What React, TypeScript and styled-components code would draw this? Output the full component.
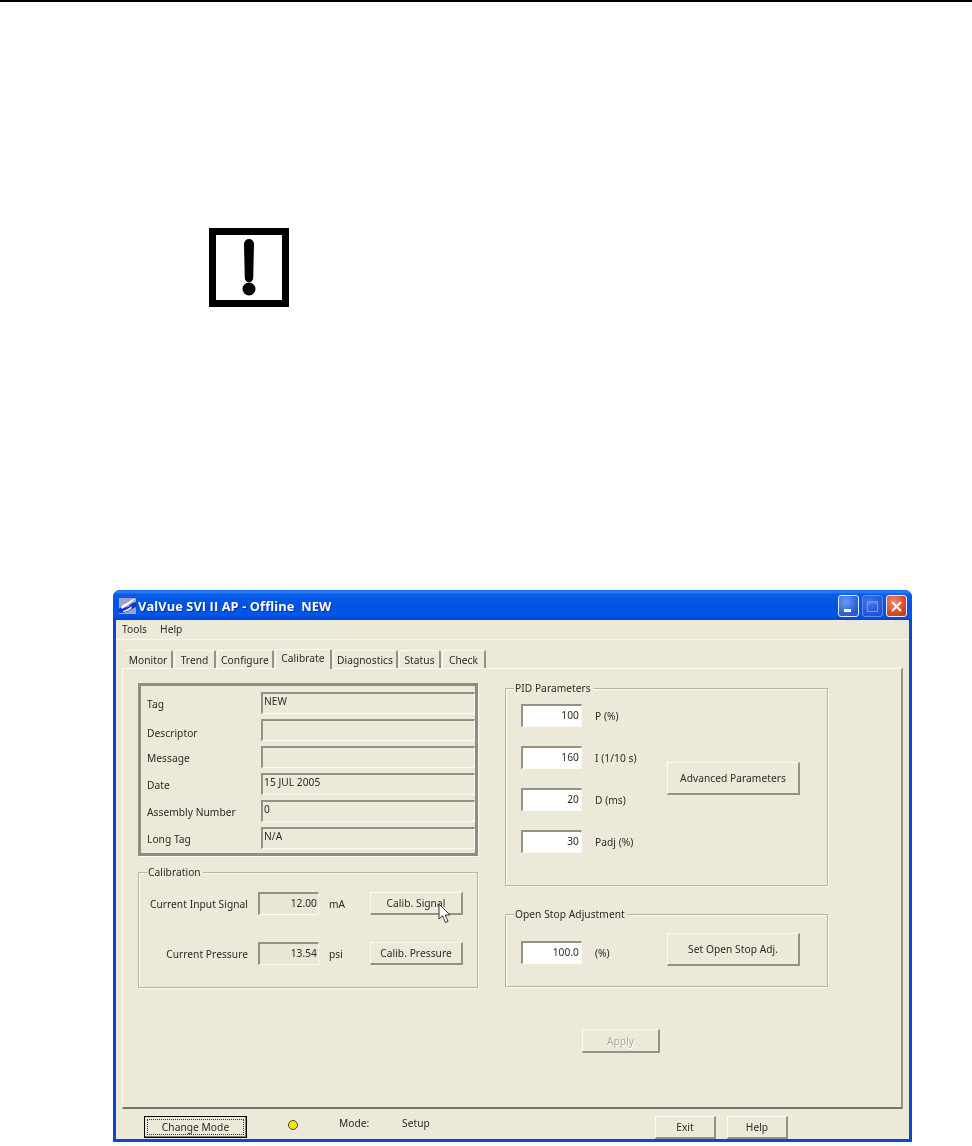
import React from "react";
import styled, { createGlobalStyle } from "styled-components";

const Global = createGlobalStyle`
  html, body { margin: 0; padding: 0; background: #fff; }
  * { box-sizing: border-box; }
`;
const Page = styled.div`
  width: 972px; height: 1146px; background: #fff; overflow: hidden;
  display: flex; flex-direction: column; align-items: flex-start;
  font-family: "Noto Sans", "Liberation Sans", sans-serif; font-size: 10.2px; letter-spacing: 0.05px; color: #2a2a26;
`;
const TopRule = styled.div`width: 100%; height: 2px; background: #000;`;
const WarnIcon = styled.svg`display: block; margin: 226px 0 0 209px;`;
const Win = styled.div`
  margin: 281px 0 0 113px; width: 799px; height: 552px;
  background: #0a46d8; border-radius: 7px 7px 0 0; display: flex; flex-direction: column;
  filter: blur(0.35px);
`;
const TitleBar = styled.div`
  height: 30px; flex: none; display: flex; align-items: center; padding: 2px 5px 0 6px; border-radius: 7px 7px 0 0;
  background: linear-gradient(180deg, #0a5ce6 0, #2f86fa 6%, #0a5cea 14%, #0052e0 50%, #0056ea 82%, #0046d2 100%);
`;
const TitleText = styled.span`
  margin-left: 2px; flex: 1; font: 700 12.8px "Open Sans", "Liberation Sans", sans-serif; color: #fff; white-space: pre;
  text-shadow: 1px 1px 0 #0a2f9a; letter-spacing: 0.1px;
`;
const WinBtns = styled.div`display: flex; gap: 3px;`;
const WinBtn = styled.div<{ $kind: "min" | "max" | "close" }>`
  width: 21px; height: 22px; border-radius: 3px; border: 1px solid ${p => (p.$kind === "max" ? "#5f8eeb" : "#e8eefc")};
  background: ${p =>
    p.$kind === "close"
      ? "radial-gradient(circle at 35% 30%, #ee8a6c, #d8492a 60%, #c23a18)"
      : p.$kind === "min"
      ? "radial-gradient(circle at 35% 30%, #6b9bf5, #2a5fdc 65%, #1f4fd0)"
      : "radial-gradient(circle at 35% 30%, #3f76e8, #2256d8 70%)"};
  display: flex; align-items: center; justify-content: center;
`;
const Client = styled.div`
  flex: 1; margin: 0 3px 4px; background: #ece9d8; display: flex; flex-direction: column;
`;
const MenuBar = styled.div`
  height: 20px; flex: none; display: flex; gap: 13px; padding: 0 0 1px 6px; align-items: center;
  border-bottom: 1px solid #f8f7f0;
`;
const TabRow = styled.div`
  height: 28px; flex: none; display: flex; align-items: flex-end; padding-left: 9px; gap: 1px; position: relative; z-index: 1;
`;
const Tab = styled.div<{ $w: number; $active?: boolean }>`
  width: ${p => p.$w}px; height: ${p => (p.$active ? 20 : 18)}px; margin-bottom: ${p => (p.$active ? -1 : 0)}px;
  background: #ece9d8; border-top: 1px solid #fbfaf4; border-left: 1px solid #fbfaf4; border-right: 2px solid #949286;
  border-radius: 2px 2px 0 0; display: flex; justify-content: center; align-items: center; padding-bottom: ${p => (p.$active ? 3 : 0)}px;
  &:first-child { border-left: 0; }
`;
const Panel = styled.div`
  height: 441px; flex: none; margin: 0 6px; padding: 14px 0 0 15px; display: grid;
  grid-template-columns: 340px 323px; column-gap: 27px; align-content: start;
  border-top: 1px solid #fbfaf4; border-left: 1px solid #fbfaf4; border-right: 2px solid #949286; border-bottom: 2px solid #75736a;
`;
const LeftCol = styled.div`display: flex; flex-direction: column; gap: 16px;`;
const RightCol = styled.div`display: flex; flex-direction: column; padding-top: 5px;`;
const TagBox = styled.div`
  height: 173px; border: 3px solid #8e8d82; box-shadow: 1px 1px 0 #fbfaf4; padding: 6px 0 0 6px;
  display: grid; grid-template-columns: 114px 1fr; row-gap: 5px; grid-auto-rows: 22px; align-items: center;
`;
const TagLabel = styled.div<{ $drop?: number }>`padding-top: ${p => p.$drop ?? 2}px;`;
const TagField = styled.div`
  height: 22px; border-top: 2px solid #949286; border-left: 2px solid #949286; border-right: 1px solid #fbfaf4; border-bottom: 1px solid #fbfaf4;
  padding: 0 0 0 1px; line-height: 14px; margin-right: 0;
`;
const Group = styled.div<{ $h: number; $mt?: number }>`
  height: ${p => p.$h}px; margin-top: ${p => p.$mt ?? 0}px; position: relative; border: 1px solid #b6b4a6; box-shadow: inset 1px 1px 0 #faf9f2, 1px 1px 0 #faf9f2;
`;
const Legend = styled.span`
  position: absolute; left: 8px; top: -8px; background: #ece9d8; padding: 0 2px 0 1px; line-height: 15px;
`;
const CalibGrid = styled.div`
  display: grid; grid-template-columns: 109px 61px 31px 93px; column-gap: 10px; row-gap: 27px; grid-auto-rows: 23px;
  padding-top: 19px; align-items: center;
`;
const CalibLabel = styled.div`text-align: right;`;
const ReadOut = styled.div`
  height: 23px; text-align: right; padding: 0 1px 0 0; line-height: 18px; background: #e9e6d5;
  border-top: 2px solid #949286; border-left: 2px solid #949286; border-right: 1px solid #fbfaf4; border-bottom: 1px solid #fbfaf4;
`;
const Btn = styled.div<{ $w?: number; $h?: number; $disabled?: boolean }>`
  position: relative; flex: none;
  width: ${p => (p.$w ? `${p.$w}px` : "auto")}; height: ${p => p.$h ?? 23}px;
  background: #ece9d8; border-top: 1px solid #fbfaf4; border-left: 1px solid #fbfaf4; border-right: 2px solid #949286; border-bottom: 2px solid #949286;
  display: flex; align-items: center; justify-content: center;
  color: ${p => (p.$disabled ? "#aca899" : "inherit")};
  text-shadow: ${p => (p.$disabled ? "1px 1px 0 #fff" : "none")};
`;
const Cursor = styled.svg`position: absolute; left: 67px; top: 10px;`;
const PidBody = styled.div`
  display: flex; align-items: center; padding: 15px 0 0 15px;
`;
const PidRows = styled.div`width: 146px; display: flex; flex-direction: column; gap: 19px;`;
const FieldRow = styled.div`display: flex; align-items: center; gap: 13px;`;
const NumInput = styled.div`
  width: 61px; height: 23px; background: #fff; text-align: right; padding-right: 2px; line-height: 18px;
  border-top: 2px solid #949286; border-left: 2px solid #949286; border-right: 1px solid #fbfaf4; border-bottom: 1px solid #fbfaf4;
`;
const StopBody = styled.div`display: flex; align-items: flex-start; padding: 18px 0 0 15px;`;
const StopRow = styled(FieldRow)`width: 146px; margin-top: 8px;`;
const ApplyRow = styled.div`padding: 42px 0 0 77px;`;
const Footer = styled.div`
  flex: 1; display: flex; align-items: flex-start; padding: 7px 121px 0 28px;
`;
const DefaultBtn = styled.div`
  width: 103px; height: 22px; border: 1px solid #000; padding: 2px; background: #ece9d8; box-shadow: inset -1px -1px 0 #85837a;
`;
const FocusInner = styled.div`
  height: 100%; border: 1px dotted #333; display: flex; align-items: center; justify-content: center;
`;
const Led = styled.div`
  width: 10px; height: 10px; border-radius: 50%; background: #f3e800; border: 1px solid #4a4a20; margin: 4px 41px 0 41px;
`;
const ModeText = styled.span<{ $w: number }>`width: ${p => p.$w}px; line-height: 15px;`;
const FooterRight = styled.div`display: flex; gap: 11px; margin-left: auto;`;

const tabs: [string, number][] = [["Monitor", 48], ["Trend", 42], ["Configure", 57], ["Calibrate", 57], ["Diagnostics", 65], ["Status", 42], ["Check", 44]];
const tagRows: [string, string, number?][] = [["Tag", "NEW"], ["Descriptor", "", 5], ["Message", ""], ["Date", "15 JUL 2005"], ["Assembly Number", "0"], ["Long Tag", "N/A"]];
const pid = [["100", "P (%)"], ["160", "I (1/10 s)"], ["20", "D (ms)"], ["30", "Padj (%)"]];

export default function App() {
  return (
    <Page>
      <Global />
      <TopRule />
      <WarnIcon width="81" height="81" viewBox="0 0 81 81">
        <rect x="3.5" y="3.5" width="73" height="72" fill="#fff" stroke="#000" strokeWidth="7" />
        <path d="M35 16 a5 5 0 0 1 10 0 l-.8 34 a4.2 4.2 0 0 1 -8.4 0 z" fill="#000" />
        <circle cx="40" cy="61" r="6.5" fill="#000" />
      </WarnIcon>
      <Win>
        <TitleBar>
          <svg width="17" height="16" viewBox="0 0 17 16">
            <rect width="17" height="16" fill="#9aa4c4" />
            <path d="M0 11 C4 6 7 13 12 6 L17 4 V9 C12 11 8 15 2 15 H0 Z" fill="#1a2fd0" />
            <path d="M2 9 C5 5 8 6 14 1 L16 1 C11 6 7 8 3 11 Z" fill="#fff" />
            <path d="M4 13 C7 12 10 10 13 8 L12 11 C9 13 6 14 4 14 Z" fill="#e8f0ff" />
          </svg>
          <TitleText>{"ValVue SVI II AP - Offline  NEW"}</TitleText>
          <WinBtns>
            <WinBtn $kind="min">
              <svg width="13" height="13" viewBox="0 0 13 13"><rect x="2" y="9" width="7" height="3" fill="#fff" /></svg>
            </WinBtn>
            <WinBtn $kind="max">
              <svg width="13" height="13" viewBox="0 0 13 13"><path d="M1.5 1.5h10v10h-10z M1.5 3h10" fill="none" stroke="#6f97ea" strokeWidth="1.2" /></svg>
            </WinBtn>
            <WinBtn $kind="close">
              <svg width="13" height="13" viewBox="0 0 13 13"><path d="M2 2l9 9M11 2l-9 9" stroke="#fff" strokeWidth="2.2" /></svg>
            </WinBtn>
          </WinBtns>
        </TitleBar>
        <Client>
          <MenuBar><span>Tools</span><span>Help</span></MenuBar>
          <TabRow>
            {tabs.map(([t, w]) => <Tab key={t} $w={w} $active={t === "Calibrate"}>{t}</Tab>)}
          </TabRow>
          <Panel>
            <LeftCol>
              <TagBox>
                {tagRows.map(([l, v, d]) => (
                  <React.Fragment key={l}>
                    <TagLabel $drop={d}>{l}</TagLabel>
                    <TagField>{v}</TagField>
                  </React.Fragment>
                ))}
              </TagBox>
              <Group $h={116}>
                <Legend>Calibration</Legend>
                <CalibGrid>
                  <CalibLabel>Current Input Signal</CalibLabel>
                  <ReadOut>12.00</ReadOut>
                  <span>mA</span>
                  <Btn $w={93}>
                    Calib. Signal
                    <Cursor width="14" height="21" viewBox="0 0 14 21">
                      <path d="M1 1 L1 16 L4.5 12.8 L7.5 19.5 L10 18.3 L7.2 12 L12 12 Z" fill="#fff" stroke="#333" strokeWidth="1" strokeLinejoin="round" />
                    </Cursor>
                  </Btn>
                  <CalibLabel>Current Pressure</CalibLabel>
                  <ReadOut>13.54</ReadOut>
                  <span>psi</span>
                  <Btn $w={93}>Calib. Pressure</Btn>
                </CalibGrid>
              </Group>
            </LeftCol>
            <RightCol>
              <Group $h={198}>
                <Legend>PID Parameters</Legend>
                <PidBody>
                  <PidRows>
                    {pid.map(([v, l]) => (
                      <FieldRow key={l}><NumInput>{v}</NumInput><span>{l}</span></FieldRow>
                    ))}
                  </PidRows>
                  <Btn $w={133} $h={33}>Advanced Parameters</Btn>
                </PidBody>
              </Group>
              <Group $h={73} $mt={28}>
                <Legend>Open Stop Adjustment</Legend>
                <StopBody>
                  <StopRow><NumInput>100.0</NumInput><span>(%)</span></StopRow>
                  <Btn $w={133} $h={33}>Set Open Stop Adj.</Btn>
                </StopBody>
              </Group>
              <ApplyRow><Btn $w={78} $h={24} $disabled>Apply</Btn></ApplyRow>
            </RightCol>
          </Panel>
          <Footer>
            <DefaultBtn><FocusInner>Change Mode</FocusInner></DefaultBtn>
            <Led />
            <ModeText $w={63}>Mode:</ModeText>
            <ModeText $w={40}>Setup</ModeText>
            <FooterRight>
              <Btn $w={61}>Exit</Btn>
              <Btn $w={61}>Help</Btn>
            </FooterRight>
          </Footer>
        </Client>
      </Win>
    </Page>
  );
}
